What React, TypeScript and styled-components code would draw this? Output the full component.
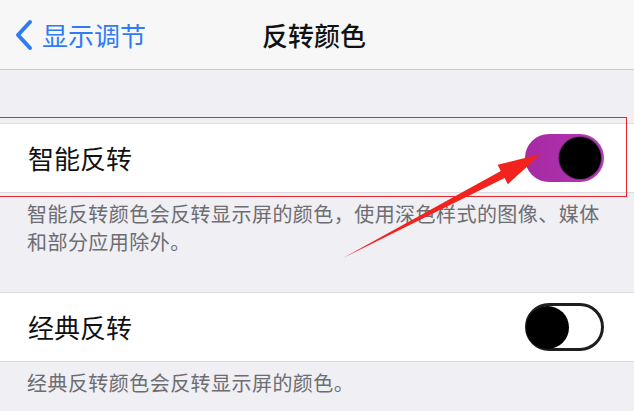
import styled, { createGlobalStyle } from "styled-components";

const GlobalStyle = createGlobalStyle`
  html, body {
    margin: 0;
    padding: 0;
    background: #efeff4;
  }
  body {
    font-family: "Noto Sans CJK SC", "Noto Sans", sans-serif;
  }
`;

const Screen = styled.div`
  position: relative;
  width: 634px;
  height: 411px;
  overflow: hidden;
  background: #efeff4;
`;

const NavBar = styled.header`
  height: 69px;
  background: #f7f7f8;
  border-bottom: 1px solid #c9c9ce;
  display: grid;
  grid-template-columns: 1fr auto 1fr;
  align-items: center;
`;

const BackButton = styled.div`
  display: flex;
  align-items: center;
  gap: 9px;
  padding-left: 15px;
  color: #2f7bf5;
  font-size: 26px;
  line-height: 1;
  padding-top: 1px;

  & svg {
    display: block;
  }
`;

const Title = styled.h1`
  margin: 0;
  font-size: 26px;
  font-weight: 500;
  color: #111;
  line-height: 1;
  padding-top: 1px;
  padding-right: 6px;
`;

const Group = styled.section<{ $first?: boolean }>`
  margin-top: ${(p) => (p.$first ? "53px" : "0")};
  background: #fff;
  border-top: 1px solid #dcdcdf;
  border-bottom: 1px solid #dcdcdf;
`;

const Row = styled.div`
  height: 68px;
  display: flex;
  align-items: center;
  justify-content: space-between;
  padding: 0 30px 0 28px;
`;

const Label = styled.span`
  font-size: 26px;
  color: #111;
  line-height: 1;
`;

const Footer = styled.p<{ $bottom: number }>`
  margin: 0;
  padding: 7px 20px ${(p) => p.$bottom}px 27px;
  font-size: 20px;
  letter-spacing: 0.45px;
  line-height: 28px;
  color: #6d6d72;
`;

const Toggle = styled.div<{ $on: boolean }>`
  position: relative;
  box-sizing: border-box;
  width: 79px;
  height: 48px;
  border-radius: 24px;
  background: ${(p) =>
    p.$on ? "linear-gradient(90deg, #a62aa2 0%, #ae31ad 60%, #b443b6 100%)" : "#fff"};
  border: ${(p) => (p.$on ? "none" : "3px solid #1e1e1e")};
  display: flex;
  align-items: center;
  justify-content: ${(p) => (p.$on ? "flex-end" : "flex-start")};
  padding: ${(p) => (p.$on ? "0 3px" : "0")};
`;

const Knob = styled.div<{ $on: boolean }>`
  width: ${(p) => (p.$on ? "42px" : "43px")};
  height: ${(p) => (p.$on ? "42px" : "43px")};
  border-radius: 50%;
  background: #000;
  box-shadow: ${(p) => (p.$on ? "0 0 0 1px #7d2a80" : "none")};
  margin-left: ${(p) => (p.$on ? "0" : "-2px")};
`;

const RedBox = styled.div`
  position: absolute;
  left: -3px;
  top: 117px;
  width: 630px;
  height: 80px;
  border: 1.5px solid #e6262b;
  box-sizing: border-box;
  pointer-events: none;
`;

const Arrow = styled.svg`
  position: absolute;
  left: 0;
  top: 0;
  pointer-events: none;
`;

const Chevron = () => (
  <svg width="18" height="32" viewBox="0 0 18 32">
    <path
      d="M15 3 L3 16 L15 29"
      fill="none"
      stroke="#2f7bf5"
      strokeWidth="4"
      strokeLinecap="round"
      strokeLinejoin="round"
    />
  </svg>
);

const Switch = ({ on }: { on: boolean }) => (
  <Toggle $on={on}>
    <Knob $on={on} />
  </Toggle>
);

const App = () => {
  return (
    <Screen>
      <GlobalStyle />
      <NavBar>
        <BackButton>
          <Chevron />
          <span>显示调节</span>
        </BackButton>
        <Title>反转颜色</Title>
        <div />
      </NavBar>

      <Group $first>
        <Row>
          <Label>智能反转</Label>
          <Switch on />
        </Row>
      </Group>
      <Footer $bottom={36}>
        智能反转颜色会反转显示屏的颜色，使用深色样式的图像、媒体和部分应用除外。
      </Footer>

      <Group>
        <Row>
          <Label>经典反转</Label>
          <Switch on={false} />
        </Row>
      </Group>
      <Footer $bottom={10}>经典反转颜色会反转显示屏的颜色。</Footer>

      <RedBox />
      <Arrow width="634" height="411" viewBox="0 0 634 411">
        <polygon
          points="343,258 504.6,178 507.8,184.3 541,154 497.6,164.7 500.8,171"
          fill="#f2221c"
        />
      </Arrow>
    </Screen>
  );
};

export default App;
